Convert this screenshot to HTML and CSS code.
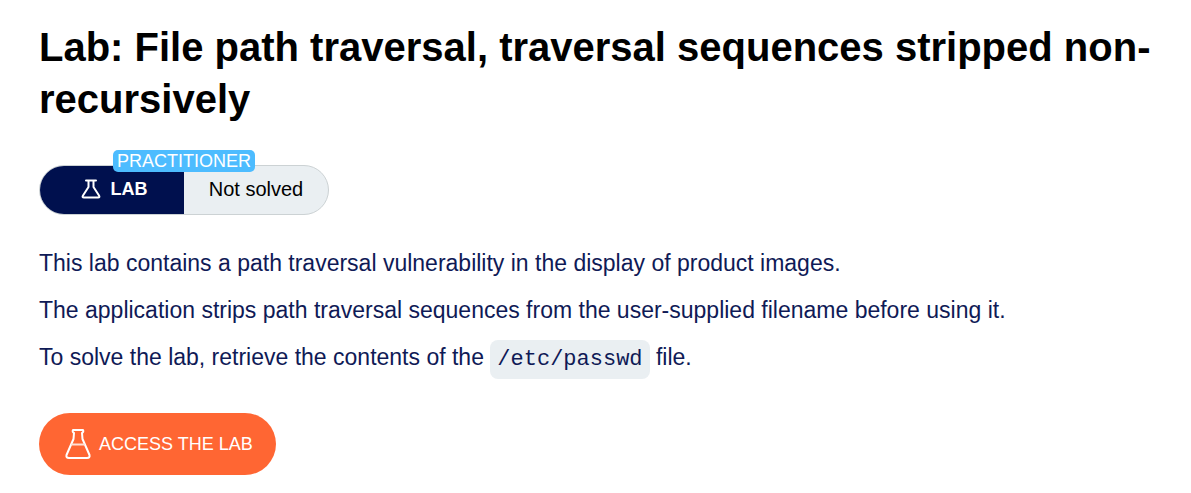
FILE: index.html
```html
<!DOCTYPE html>
<html lang="en">
<head>
<meta charset="utf-8">
<title>Lab: File path traversal</title>
<link rel="stylesheet" href="styles.css">
</head>
<body>
<main class="page">
  <h1 class="title">Lab: File path traversal, traversal sequences stripped non-recursively</h1>
  <div class="status">
    <span class="status-level">PRACTITIONER</span>
    <span class="status-type">
      <svg class="flask-small" viewBox="0 0 20 20" aria-hidden="true"><path d="M5 1.500H15M7.500 1.500V8L2 16.500Q.8 18.500 3 18.500H17Q19.200 18.500 18 16.500L12.500 8V1.500"/></svg>
      LAB
    </span>
    <span class="status-state">Not solved</span>
  </div>
  <p class="text">This lab contains a path traversal vulnerability in the display of product images.</p>
  <p class="text">The application strips path traversal sequences from the user-supplied filename before using it.</p>
  <p class="text">To solve the lab, retrieve the contents of the <code class="code">/etc/passwd</code> file.</p>
  <a class="access" href="#lab">
    <svg class="flask-large" viewBox="0 0 26 32" aria-hidden="true"><path d="M8 2H18Q19 4 17 5L17.500 11L24.500 27Q25.200 30 22 30H4Q.8 30 1.500 27L8.500 11L9 5Q7 4 8 2Z"/><path class="flask-level" d="M7 16.500H19"/></svg>
    ACCESS THE LAB
  </a>
</main>
</body>
</html>
```
FILE: styles.css
```css
body {
  margin: 0;
  background: #fff;
  color: #0f1a56;
  font-family: "Liberation Sans", Arial, sans-serif;
}

.page {
  padding: 21px 24px 18px 39px;
}

.title {
  margin: 0 0 40px;
  color: #000;
  font-size: 40px;
  line-height: 52px;
}

.status {
  position: relative;
  display: grid;
  grid-template-columns: 1fr 1fr;
  box-sizing: border-box;
  width: 290px;
  height: 50px;
  margin-bottom: 32px;
  border: 1px solid #ccd2d4;
  border-radius: 25px;
  background: #eaeff2;
}

.status-type,
.status-state {
  display: flex;
  align-items: center;
  justify-content: center;
  padding-bottom: 2px;
  font-size: 20px;
}

.status-type {
  gap: 10px;
  padding-left: 4px;
  border-radius: 24px 0 0 24px;
  background: #00104e;
  color: #fff;
  font-size: 18px;
  font-weight: bold;
}

.status-state {
  color: #000;
}

.status-level {
  position: absolute;
  top: -16px;
  left: 73px;
  padding: 0 4px;
  border-radius: 5px;
  background: #4dbcff;
  color: #fff;
  font-size: 18px;
  line-height: 22px;
}

.flask-small,
.flask-large {
  fill: none;
  stroke: #fff;
  stroke-width: 2;
  stroke-linecap: round;
  stroke-linejoin: round;
}

.flask-small {
  width: 20px;
  height: 20px;
}

.flask-large {
  width: 26px;
  height: 32px;
}

.flask-level {
  stroke: #ffe0d6;
}

.text {
  margin: 0 0 15px;
  font-size: 23px;
  line-height: 32px;
}

.code {
  padding: 7px;
  border-radius: 8px;
  background: #eaeff2;
  font-family: "Liberation Mono", "Courier New", monospace;
  font-size: 22px;
}

.access {
  display: inline-flex;
  align-items: center;
  gap: 8px;
  height: 62px;
  margin-top: 22px;
  padding: 0 23px 0 26px;
  border-radius: 31px;
  background: #ff6633;
  color: #fff;
  font-size: 18px;
  text-decoration: none;
}
```
